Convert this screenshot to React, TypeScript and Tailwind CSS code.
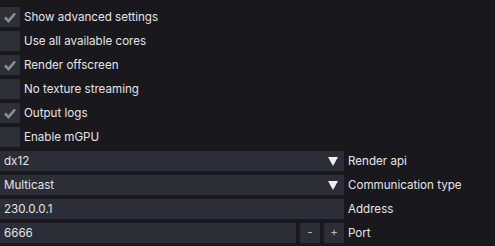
const checks = [
  { label: "Show advanced settings", on: true },
  { label: "Use all available cores", on: false },
  { label: "Render offscreen", on: true },
  { label: "No texture streaming", on: false },
  { label: "Output logs", on: true },
  { label: "Enable mGPU", on: false },
];

const Check = ({ label, on }: { label: string; on: boolean }) => (
  <div className="flex items-center gap-1 h-5">
    <div className="w-5 h-5 bg-[#2e3038] flex items-center justify-center">
      {on && (
        <svg width="14" height="14" viewBox="0 0 14 14">
          <path d="M2 7.5 L5.5 11 L12 3.5" stroke="#8b8e96" strokeWidth="2.6" fill="none" />
        </svg>
      )}
    </div>
    <span className="pt-px">{label}</span>
  </div>
);

const Combo = ({ value, label }: { value: string; label: string }) => (
  <div className="flex items-center gap-1 h-5">
    <div className="w-[344px] h-5 bg-[#2b2e36] flex items-center justify-between pl-1 pr-[6px]">
      <span className="pt-px">{value}</span>
      <svg width="10" height="9" viewBox="0 0 10 9">
        <path d="M0 0 H10 L5 9 Z" fill="#f0f0f0" />
      </svg>
    </div>
    <span className="pt-px">{label}</span>
  </div>
);

export default function App() {
  return (
    <div
      className="w-[495px] h-[246px] bg-[#19191d] text-[#e4e4e6] text-[11.6px] pt-[7px] flex flex-col gap-1"
      style={{ fontFamily: "Inter, 'Liberation Sans', sans-serif" }}
    >
      {checks.map((c) => (
        <Check key={c.label} {...c} />
      ))}
      <Combo value="dx12" label="Render api" />
      <Combo value="Multicast" label="Communication type" />
      <div className="flex items-center gap-1 h-5">
        <div className="w-[344px] h-5 bg-[#2b2e36] flex items-center pl-1 pt-px">230.0.0.1</div>
        <span className="pt-px">Address</span>
      </div>
      <div className="flex items-center gap-1 h-5">
        <div className="w-[296px] h-5 bg-[#2b2e36] flex items-center pl-1 pt-px">6666</div>
        <div className="w-5 h-5 bg-[#2b2e36] flex items-center justify-center text-[#b8bac0]">-</div>
        <div className="w-5 h-5 bg-[#2b2e36] flex items-center justify-center text-[#b8bac0]">+</div>
        <span className="pt-px">Port</span>
      </div>
    </div>
  );
}
